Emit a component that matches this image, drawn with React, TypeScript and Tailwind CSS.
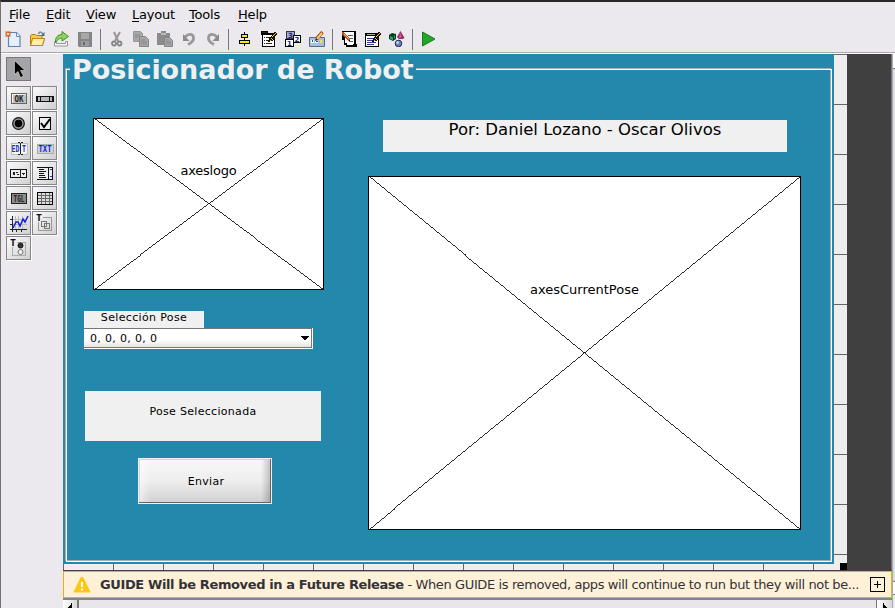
import React from 'react';

type IconProps = { children: React.ReactNode; size?: number };

function Icon({ children, size = 16 }: IconProps) {
  return (
    <svg width={size} height={size} viewBox={`0 0 ${size} ${size}`} className="block shrink-0" fill="none">
      {children}
    </svg>
  );
}

function Pencil() {
  return (
    <g shapeRendering="crispEdges">
      <path d="M13 1h2v1h1v2h-1v1h-1v1h-1v1h1v1h-1v1h-1v1H9v1H7V9h1V7h1V6h1V5h1V4h1V3h1z" fill="#1a1200" />
      <path d="M12 4h1V3h1V2h1v1h-1v1h-1v1h-1v1h-1V5h1z" fill="#ffd21f" />
      <path d="M10 7h1v1h-1zM11 8h1v1h-1zM9 9h1v1H9z" fill="#e8c070" />
    </g>
  );
}

const tools: Record<string, React.ReactNode> = {
  create: (
    <>
      <path d="M3.500 1.500h8l3.500 3.500v10.500h-11.500z" fill="#e4f1fd" stroke="#5f80b5" strokeWidth="1.200" />
      <path d="M11.500 1.500v4h3.500" fill="#fff" stroke="#6286b9" />
      <path d="M.5 .5l5 5M5.500 .5l-5 5M3 0v6M0 3h6" stroke="#e46024" strokeWidth="1.200" />
      <rect x="2" y="2" width="2" height="2" fill="#ffeaa4" />
    </>
  ),
  open: (
    <>
      <path d="M1.500 14V4.500l1-1h4l1 1h5.500v3" fill="#f7c94f" stroke="#b97b12" />
      <path d="M1.500 14.500l2-7h12l-2 7z" fill="#fff2a8" stroke="#c08a19" strokeWidth="1.200" />
      <path d="M9.500 3c1-3 3-2 4.500 0" stroke="#6b87ad" strokeWidth="1.500" />
      <path d="M15.500 1v4h-4z" fill="#496e9f" />
    </>
  ),
  share: (
    <>
      <path d="M1.500 10.500h2v2h9v-2h2v4.500h-13z" fill="#f5f5f5" stroke="#999" />
      <path d="M2.500 12C2 6 5 3.500 9 3.500V.5l6.500 5L9 10V7C7 7 5 8 2.500 12z" fill="#8fd15b" stroke="#478c2c" />
    </>
  ),
  save: (
    <>
      <path d="M1 1h14v15H2l-1-1z" fill="#858585" />
      <path d="M4 2h8v6H4z" fill="#a8a8a8" />
      <path d="M4 10h8v5H4z" fill="#9d9d9d" />
      <path d="M6 11h2v3H6z" fill="#686868" />
    </>
  ),
  cut: (
    <>
      <path d="M5 1l4 9M11 1l-5 9" stroke="#969696" strokeWidth="2" />
      <circle cx="5" cy="12.500" r="2" stroke="#858585" strokeWidth="1.800" />
      <circle cx="10.500" cy="12.500" r="2" stroke="#858585" strokeWidth="1.800" />
    </>
  ),
  copy: (
    <>
      <path d="M.5.5h7l2 2v8h-9z" fill="#a8a8a8" stroke="#969696" />
      <path d="M6.500 5.500h6l3 3v7h-9z" fill="#a8a8a8" stroke="#858585" />
      <path d="M2 4h5M2 6h3M8 9h4M8 11h6M8 13h6" stroke="#858585" />
    </>
  ),
  paste: (
    <>
      <path d="M0 2h4V0h5v2h4v12H0z" fill="#8b8b8b" />
      <path d="M4 2h5v2H4z" fill="#b8b8b8" />
      <path d="M7.500 6.500h5l3 3v6h-8z" fill="#a8a8a8" stroke="#858585" />
      <path d="M9 9h3M9 11h5M9 13h5" stroke="#858585" />
    </>
  ),
  undo: (
    <>
      <path d="M4 6c4-4 8-3 8.500.5S10 12 7 13.500" stroke="#999" strokeWidth="2.800" />
      <path d="M2 3v7h6.500z" fill="#8b8b8b" />
    </>
  ),
  redo: (
    <>
      <path d="M12 6c-4-4-8-3-8.500.5S6 12 9 13.500" stroke="#999" strokeWidth="2.800" />
      <path d="M14 3v7H7.500z" fill="#8b8b8b" />
    </>
  ),
  align: (
    <g shapeRendering="crispEdges">
      <path d="M7 1h1v14H7z" fill="#000" />
      <path d="M4 3h7v4H4zM2 9h11v4H2z" fill="#000" />
      <path d="M5 4h5v2H5zM3 10h9v2H3z" fill="#ffea00" />
    </g>
  ),
  menuEditor: (
    <g shapeRendering="crispEdges">
      <path d="M0 0h7v2h7v14H1V4H0z" fill="#000" />
      <path d="M2 4h11v11H2z" fill="#fff" />
      <path d="M1 1h5v1H1zM3 6h1v1H3zM5 6h4v1H5zM3 9h1v1H3zM5 9h3v1H5zM3 12h1v1H3zM5 12h6v1H5z" fill="#222" />
      <Pencil />
    </g>
  ),
  tabOrder: (
    <>
      <g shapeRendering="crispEdges">
        <path d="M1 0h9v8H1z" fill="#34344a" />
        <path d="M2 1h7v6H2z" fill="#a4a8bd" />
        <path d="M8.500 4.500h7v7h-7zM.5 8.500h8v7h-8z" fill="#fff" stroke="#000" />
      </g>
      <g fill="#1b1c8f" fontFamily="DejaVu Sans, sans-serif" fontWeight="bold" fontSize="7">
        <text x="3" y="6.500">3</text>
        <text x="9.500" y="10.500">2</text>
        <text x="2" y="14.500">1</text>
      </g>
    </>
  ),
  toolbarEditor: (
    <>
      <path d="M.5 6.500h15v9H.5z" fill="#a9c0dd" stroke="#596884" />
      <path d="M2 9h3v3H2zM6 9h3v3H6z" fill="#fff" />
      <path d="M3 9h1v2H3zM7 10h2v1H7z" fill="#1c51ae" />
      <path d="M11 9h2v3h-2z" fill="#ffe045" />
      <path d="M13.500 1l-6 7" stroke="#a14c20" strokeWidth="3.500" />
      <path d="M13 2L8 8" stroke="#ffc46a" strokeWidth="2" />
      <path d="M6 10l1-3 2 2z" fill="#222" />
    </>
  ),
  code: (
    <g shapeRendering="crispEdges">
      <path d="M1 0h14v13h1v3H5v-2H3V9H1z" fill="#000" />
      <path d="M2 1h11v12h-1v1H6v-2H4V3H2z" fill="#fff" />
      <path d="M7 4h5v1H7zM9 7h3v1H9zM8 10h4v1H8z" fill="#4b5795" />
      <path d="M1 1h2v1h1v1h1v1h1v1h1v1h1v1h1v3H7V9H6V8H5V7H4V6H3V5H2V4H1z" fill="#be4d23" />
      <path d="M3 3h1v1h1v1h1v1h1v1h1v1H7V7H6V6H5V5H4V4H3z" fill="#ffd36e" />
      <path d="M8 9h1v1H8zM12 13h2v1h-2z" fill="#000" />
    </g>
  ),
  inspector: (
    <g shapeRendering="crispEdges">
      <path d="M0 2h14v14H0z" fill="#000" />
      <path d="M1 5h12v10H1z" fill="#fff" />
      <path d="M2 3h8v1H2z" fill="#aaa" />
      <path d="M2 7h6v1H2zM2 9h5v1H2zM2 11h9v1H2zM2 13h7v1H2z" fill="#30399b" />
      <Pencil />
    </g>
  ),
  objects: (
    <>
      <path d="M0 4l3-2 4 1v5l-3 2-4-2z" fill="#08391c" />
      <path d="M1 5l3 1v3L1 8zM5 5l1-1v3l-1 1z" fill="#19a867" />
      <path d="M11.500 0l4 7-2 1H10L8 6z" fill="#8b295d" />
      <path d="M11 1l-1 6 3-.5z" fill="#d35d9b" />
      <circle cx="9.500" cy="12.500" r="3.300" fill="#7180b6" stroke="#242c5b" />
      <circle cx="8.500" cy="11.500" r="1.200" fill="#d7e4ff" />
    </>
  ),
  run: <path d="M1.500 1v14L14 8z" fill="#23a629" stroke="#157e1b" />,
};

function Tool({ name }: { name: string }) {
  return (
    <button className="mx-1 block h-4 w-4 shrink-0">
      <Icon>{tools[name]}</Icon>
    </button>
  );
}

function Separator() {
  return <div className="ml-[3px] mr-1 h-[21px] w-px shrink-0 bg-[#77757b]" />;
}

function Caption({ x, y, width, fill, children }: { x: number; y: number; width: number; fill: string; children: string }) {
  return (
    <text
      x={x}
      y={y}
      textLength={width}
      lengthAdjust="spacingAndGlyphs"
      fill={fill}
      fontFamily="DejaVu Sans Mono, monospace"
      fontWeight="bold"
      fontSize="8"
    >
      {children}
    </text>
  );
}

const controls: Record<string, React.ReactNode> = {
  push: (
    <>
      <path d="M2.500 4.500h15v10h-15z" fill="#c0c0c0" stroke="#666" />
      <path d="M3.500 13.500V5.500h13" stroke="#f2f2f2" />
      <Caption x={5.5} y={12.5} width={9} fill="#222">OK</Caption>
    </>
  ),
  slider: (
    <>
      <path d="M1 7h18v6H1z" fill="#111" />
      <path d="M3 8h2v4H3zM15 8h2v4h-2zM6 8h8v4H6z" fill="#b9b9b9" />
    </>
  ),
  radio: (
    <g shapeRendering="auto">
      <circle cx="9.500" cy="9.500" r="5.800" fill="#999" stroke="#111" strokeWidth="1.200" />
      <circle cx="9.500" cy="9.500" r="3.800" fill="#000" />
    </g>
  ),
  check: (
    <>
      <path d="M4.500 3.500h11v12h-11z" fill="#eee" stroke="#000" />
      <path d="M6 9l3 4 6-8" stroke="#000" strokeWidth="2" shapeRendering="auto" />
    </>
  ),
  edit: (
    <>
      <path d="M2 4h16v11H2z" fill="#f4f4f4" stroke="#bbb" />
      <Caption x={2.5} y={12.5} width={8} fill="#2031c4">ED</Caption>
      <Caption x={13} y={12.5} width={4} fill="#2031c4">T</Caption>
      <path d="M9 3.500h2m1 0h2M11.500 4v11M9 15.500h2m1 0h2" stroke="#222" />
    </>
  ),
  text: (
    <>
      <path d="M2 5h16v9H2z" fill="#d0d0d0" stroke="#aaa" />
      <Caption x={3.500} y={12.500} width={13} fill="#0826e0">TXT</Caption>
    </>
  ),
  popup: (
    <>
      <rect x="1.500" y="5.500" width="16" height="8" rx="1" fill="#eee" stroke="#111" />
      <path d="M11.500 6v7" stroke="#222" />
      <path d="M4 8h2v3H4zM7 8h2v1H7zM8 10h2v1H8zM13 9h3v1h-1v1h-1v-1h-1z" fill="#222" />
    </>
  ),
  list: (
    <>
      <path d="M2 3h16v13H2z" fill="#ececec" />
      <path d="M2 3.500h16M2 15.500h16M17.500 3v13M4 5.500h5M4 7.500h7M4 9.500h5M4 11.500h6M4 13.500h7M13.500 4v12" stroke="#111" />
      <path d="M15 5h2v1h-2zM15 12h2v1h-2z" fill="#263ce0" />
    </>
  ),
  toggle: (
    <>
      <path d="M2.500 4.500h15v10h-15z" fill="#8a8a8a" stroke="#222" />
      <Caption x={4.500} y={12.500} width={11} fill="#222">TGL</Caption>
    </>
  ),
  table: (
    <>
      <path d="M2 3h16v13H2z" fill="#ddd" />
      <path d="M3 6.500h14M3 9.500h14M3 12.500h14M6.500 4v11M10.500 4v11M14.500 4v11" stroke="#666" />
      <path d="M2.500 3.500h15v12h-15z" stroke="#000" strokeWidth="1.500" />
    </>
  ),
  axes: (
    <>
      <path d="M6.500 2v14M9.500 2v14M13.500 2v14M3 5.500h15M3 10.500h15" stroke="#bbb" />
      <path d="M3.500 2v16M1 15.500h17M1 5.500h2M1 10.500h2M7.500 15v3M12.500 15v3" stroke="#222" />
      <path d="M4 14l3-6 2 0 2 4 3-7 2 3 3-6" stroke="#111bdf" strokeWidth="1.500" shapeRendering="auto" />
    </>
  ),
  panel: (
    <>
      <path d="M8 3.500h8.500v13H3.500V8" stroke="#999" />
      <Caption x={1} y={6.500} width={6} fill="#111">T</Caption>
      <path d="M6.500 7.500h5v5h-5zM9.500 9.500h5v5h-5z" stroke="#777" />
    </>
  ),
  group: (
    <>
      <path d="M8 3.500h8.500v13H3.500V8" stroke="#aaa" />
      <Caption x={1} y={6.500} width={6} fill="#111">T</Caption>
      <g shapeRendering="auto">
        <circle cx="11.500" cy="6.500" r="2.500" fill="#333" stroke="#111" />
        <circle cx="11.500" cy="13" r="2.500" fill="#eee" stroke="#777" />
      </g>
    </>
  ),
};

function PaletteButton({ name }: { name: string }) {
  return (
    <div className="h-[25px] w-[26px] border-b border-r border-white">
      <button className="flex h-6 w-[25px] items-center justify-center border border-[#87868a] bg-gradient-to-br from-[#fbfbfb] to-[#d0d0d0]">
        <svg width="19" height="19" viewBox="0 0 19 19" fill="none" shapeRendering="crispEdges" className="overflow-visible">
          {controls[name]}
        </svg>
      </button>
    </div>
  );
}

function AxesBox({ width, height, children }: { width: number; height: number; children: React.ReactNode }) {
  return (
    <div className="grid bg-white" style={{ width, height }}>
      <svg width={width} height={height} className="col-start-1 row-start-1" shapeRendering="crispEdges" stroke="#000" fill="none">
        <path d={`M.5 .5H${width - 0.5}V${height - 0.5}H.5Z`} />
        <path d={`M.5 .5L${width - 0.5} ${height - 0.5}M.5 ${height - 0.5}L${width - 0.5} .5`} strokeWidth="0.85" />
      </svg>
      <div className="col-start-1 row-start-1 flex justify-center">{children}</div>
    </div>
  );
}

const menus = [
  { label: 'File', style: 'w-[37px]' },
  { label: 'Edit', style: 'w-[40px]' },
  { label: 'View', style: 'w-[46px]' },
  { label: 'Layout', style: 'w-[57px]' },
  { label: 'Tools', style: 'w-[49px]' },
  { label: 'Help', style: 'w-[45px]' },
];

const widgets = ['push', 'slider', 'radio', 'check', 'edit', 'text', 'popup', 'list', 'toggle', 'table', 'axes', 'panel', 'group'];
const toolGroups = [
  ['create', 'open', 'share', 'save'],
  ['cut', 'copy', 'paste', 'undo', 'redo'],
  ['align', 'menuEditor', 'tabOrder', 'toolbarEditor'],
  ['code', 'inspector', 'objects'],
  ['run'],
];

export default function App() {
  return (
    <div className="flex h-[608px] w-[895px] flex-col overflow-hidden border-l border-t-2 border-l-[#77706f] border-t-[#2b2727] bg-[#ebe9ed] font-['DejaVu_Sans',sans-serif] text-black">
      <nav className="flex h-[26px] shrink-0 pl-2 pt-[5px] text-[13px] leading-4 tracking-[-.2px]">
        {menus.map(({ label, style }) => (
          <span key={label} className={style}>
            <span className="underline underline-offset-2">{label[0]}</span>
            {label.slice(1)}
          </span>
        ))}
      </nav>
      <div className="flex h-6 shrink-0 items-start">
        {toolGroups.map((group, index) => (
          <div key={index} className="flex h-[22px] items-center">
            {index > 0 && <Separator />}
            {group.map((name) => (
              <Tool key={name} name={name} />
            ))}
          </div>
        ))}
      </div>
      <div className="h-px shrink-0 bg-[#a9a7ab]" />
      <div className="h-px shrink-0 bg-white" />
      <main className="flex h-[554px] shrink-0">
        <aside className="w-[62px] shrink-0 pl-[5px] pt-[3px]">
          <button className="flex h-6 w-[25px] items-center justify-center border border-[#77767a] bg-[#a5a4a8]">
            <svg width="18" height="20" viewBox="0 0 18 20">
              <path d="M4.500 1.500v14l3.500-3 2.500 6 3-1.500-3-5.500h4.500z" fill="#000" stroke="#ddd" strokeWidth=".6" />
            </svg>
          </button>
          <div className="mt-[5px] grid grid-cols-[26px_26px]">
            {widgets.map((name) => (
              <PaletteButton key={name} name={name} />
            ))}
          </div>
        </aside>
        <div className="flex w-[829px] shrink-0 flex-col">
          <div className="flex h-[516px] bg-[#404040]">
            <div className="w-[771px]">
              <div className="grid h-[510px] bg-[#2488ad]">
                <div className="col-start-1 row-start-1 ml-[2px] grid h-[508px] w-[767px] pt-[14px]">
                  <div className="col-start-1 row-start-1 mb-px mr-px border border-[#aaa9ad]" />
                  <div className="col-start-1 row-start-1 ml-px mt-px border border-white" />
                </div>
                <div className="z-10 col-start-1 row-start-1 flex h-[510px] flex-col">
                  <h1 className="ml-[7px] h-[31px] w-[346px] whitespace-nowrap bg-[#2488ad] pl-[2px] text-[27px] font-bold leading-[32px] tracking-[-.05px] text-[#f0f0f0]">
                    Posicionador de Robot
                  </h1>
                  <div className="flex">
                    <section className="w-[305px] shrink-0 pl-[21px] pt-[33px]">
                      <div className="ml-[9px]">
                        <AxesBox width={231} height={172}>
                          <span className="mt-[45px] text-[13px] leading-4 tracking-[-.2px]">axeslogo</span>
                        </AxesBox>
                      </div>
                      <div className="mt-[21px] h-[17px] w-[120px] bg-[#f0f0f0] text-center text-[11px] leading-[13px] tracking-[.35px]">
                        Selección Pose
                      </div>
                      <div className="flex h-[21px] w-[229px] items-center justify-between border-b border-r border-white">
                        <div className="flex h-5 w-[228px] items-center justify-between border-y border-r border-[#77767c] bg-gradient-to-b from-white from-60% to-[#e5e5e7] pl-[6px]">
                          <span className="pt-[2px] text-[11px] leading-4 tracking-[.33px]">0, 0, 0, 0, 0</span>
                          <svg width="12" height="6" shapeRendering="crispEdges">
                            <path d="M2 1h8v1H9v1H8v1H7v1H5V4H4V3H3V2H2z" />
                          </svg>
                        </div>
                      </div>
                      <div className="ml-px mt-[42px] h-[50px] w-[236px] bg-[#f0f0f0] pt-[14px] text-center text-[11px] leading-[14px] tracking-[.3px]">
                        Pose Seleccionada
                      </div>
                      <button className="ml-[54px] mt-[17px] block h-[46px] w-[134px] border border-[#f0f0f0] text-[11px] tracking-[.3px]">
                        <div className="h-11 w-[132px] border-b border-r border-[#656468]">
                          <div className="grid h-[43px] w-[131px] grid-cols-1 grid-rows-1 border-l border-t border-[#d5d3db] bg-gradient-to-b from-[#f7f7f7] via-[#eeeeee] to-[#d2d2d2]">
                            <div className="col-start-1 row-start-1 flex items-center justify-center bg-gradient-to-r from-white/50 via-transparent via-8% to-transparent pt-[2px]">
                              <span className="pl-[2px]">Enviar</span>
                            </div>
                            <div className="col-start-1 row-start-1 ml-auto w-[9px] bg-gradient-to-r from-transparent to-black/20" />
                          </div>
                        </div>
                      </button>
                    </section>
                    <section className="pt-[35px]">
                      <div className="ml-[15px] h-8 w-[404px] bg-[#f0f0f0] text-center text-[16.5px] leading-[19px]">
                        Por: Daniel Lozano - Oscar Olivos
                      </div>
                      <div className="mt-6">
                        <AxesBox width={433} height={354}>
                          <span className="mt-[106px] text-[13px] leading-4">axesCurrentPose</span>
                        </AxesBox>
                      </div>
                    </section>
                  </div>
                </div>
              </div>
              <div className="flex h-[6px] bg-[#eee]">
                {Array.from({ length: 16 }, (_, i) => (
                  <div key={i} className="h-full w-[50px] shrink-0 border-l border-[#66666a] last:w-[21px]" />
                ))}
              </div>
            </div>
            <div className="flex w-[13px] flex-col bg-[#eee]">
              {Array.from({ length: 10 }, (_, i) => (
                <div key={i} className="h-[50px] shrink-0 border-t border-[#66666a]" />
              ))}
              <div className="h-[9px] border-t border-[#66666a]" />
              <div className="ml-[6px] h-[7px] w-[7px] bg-black" />
            </div>
            <div className="ml-auto w-px bg-[#77767a]" />
          </div>
          <div className="h-px bg-[#404040]" />
          <div className="flex h-[27px] shrink-0 items-center border border-[#e9ad23] bg-[#fff1d8] pl-[9px] text-[13px] text-[#333238]">
            <svg width="18" height="18" viewBox="0 0 18 18" className="mr-[9px] shrink-0">
              <path d="M8 1.500h2L17 16H1z" fill="#ffc715" stroke="#ffc715" strokeLinejoin="round" />
              <path d="M9 6v5M9 12.500v2" stroke="#fff" strokeWidth="2" />
            </svg>
            <div className="w-[764px] shrink-0 whitespace-nowrap">
              <strong className="tracking-[-.38px]">GUIDE Will be Removed in a Future Release</strong>
              <span className="tracking-[-.38px]"> - When GUIDE is removed, apps will continue to run but they will not be...</span>
            </div>
            <button className="ml-[6px] h-[15px] w-[15px] shrink-0 border border-black">
              <svg width="13" height="13" viewBox="0 0 13 13" shapeRendering="crispEdges">
                <path d="M6 3h1v7H6zM3 6h7v1H3z" />
              </svg>
            </button>
          </div>
          <div className="flex h-[10px] border-t-2 border-[#858487] bg-[#e8e6eb]">
            <div className="h-[9px] w-4 border-r-2 border-[#77767a] bg-gradient-to-r from-white to-[#d8d8da]">
              <svg width="14" height="9" shapeRendering="crispEdges">
                <path d="M9 3v6H5V7h1V6h1V5h1V3z" />
              </svg>
            </div>
            <div className="ml-auto h-[9px] w-4 border-l border-[#77767a] bg-gradient-to-r from-white to-[#d8d8da]">
              <svg width="14" height="9" shapeRendering="crispEdges">
                <path d="M6 3h1v2h1v1h1v1h1v2H6z" />
              </svg>
            </div>
          </div>
        </div>
        <div className="flex flex-1 flex-col border-l border-[#aaa9ad]">
          <div className="h-[15px] border-b border-[#77767a] bg-white" />
          <div className="h-[512px] bg-[#dddce0]" />
          <div className="h-[14px] border-y border-[#77767a] bg-white" />
        </div>
      </main>
    </div>
  );
}
